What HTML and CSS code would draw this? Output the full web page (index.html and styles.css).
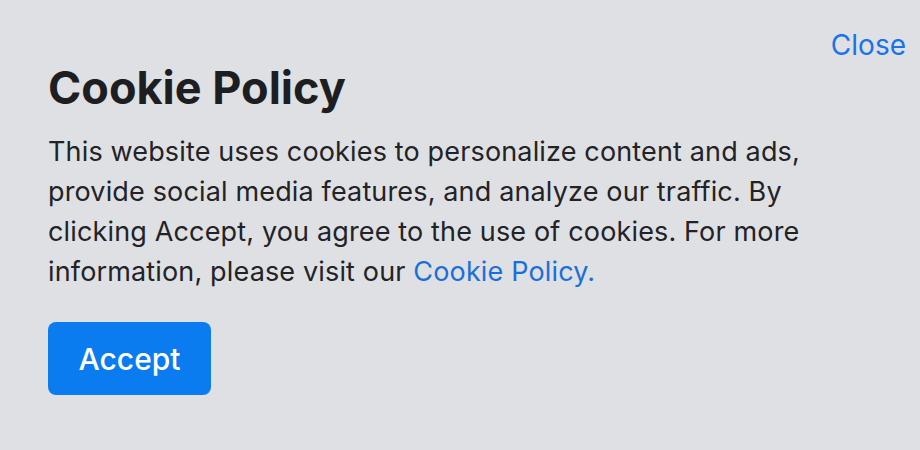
FILE: index.html
```html
<!DOCTYPE html>
<html>
<head>
<meta charset="utf-8">
<link rel="stylesheet" href="styles.css">
</head>
<body>
<div class="banner">
  <a class="close" href="#">Close</a>
  <h1 class="title">Cookie Policy</h1>
  <p class="text">This website uses cookies to personalize content and ads, provide social media features, and analyze our traffic. By clicking Accept, you agree to the use of cookies. For more information, please visit our <a class="link" href="#">Cookie Policy.</a></p>
  <button class="accept">Accept</button>
</div>
</body>
</html>
```

FILE: styles.css
```css
html, body {
  margin: 0;
  padding: 0;
  background: #dfe0e4;
}
.banner {
  position: relative;
  width: 920px;
  height: 450px;
  box-sizing: border-box;
  padding: 60px 48px 0 48px;
  font-family: Inter, "Liberation Sans", Arial, sans-serif;
  color: #222326;
}
.close {
  position: absolute;
  top: 28px;
  right: 14px;
  font-size: 28px;
  color: #1a73e8;
  text-decoration: none;
}
.title {
  margin: 0;
  font-size: 45px;
  font-weight: 700;
  line-height: 56px;
  color: #1d1e21;
}
.text {
  margin: 16px 0 0 0;
  font-size: 27px;
  letter-spacing: 0.15px;
  line-height: 40px;
  width: 790px;
}
.link {
  color: #1a6fd8;
  text-decoration: none;
}
.accept {
  margin-top: 30px;
  width: 163px;
  height: 73px;
  border: none;
  border-radius: 8px;
  background: #0a7cf0;
  color: #fff;
  font-family: Inter, "Liberation Sans", Arial, sans-serif;
  font-size: 30px;
  font-weight: 500;
  padding: 0;
}
```
